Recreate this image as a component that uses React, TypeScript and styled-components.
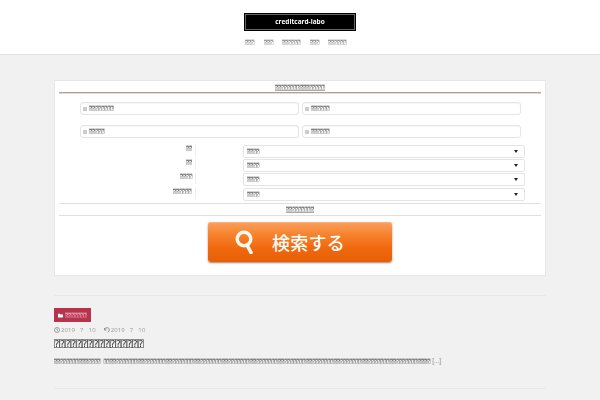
import React from "react";
import styled, { createGlobalStyle } from "styled-components";

const Global = createGlobalStyle`
  html, body { margin: 0; padding: 0; background: #f1f1f1; }
  body { width: 600px; height: 400px; overflow: hidden; font-family: "DejaVu Sans", sans-serif; color: #333; }
  * { box-sizing: border-box; }
`;

const Header = styled.header`
  height: 55px;
  background: #fff;
  border-bottom: 1px solid #e2e2e2;
  display: flex;
  flex-direction: column;
  align-items: center;
  padding-top: 13px;
`;
const Logo = styled.div`
  width: 112px;
  height: 18px;
  background: #000;
  padding: 1px;
  display: flex;
`;
const LogoInner = styled.div`
  flex: 1;
  border: 1px solid #666;
  color: #fff;
  font: bold 6.5px/14px "Open Sans", sans-serif;
  text-align: center;
  will-change: transform;
`;
const Nav = styled.nav`
  margin: 9px 8px 0 0;
  display: flex;
  gap: 9px;
`;
const Tofu = styled.span<{ $size?: number; $color?: string; $track?: number; $underline?: boolean }>`
  display: inline-block;
  will-change: transform;
  font-family: "DejaVu Sans Mono", monospace;
  font-size: ${(p) => p.$size ?? 5}px;
  line-height: 1;
  color: ${(p) => p.$color ?? "#555"};
  letter-spacing: ${(p) => p.$track ?? 0.1}px;
  white-space: nowrap;
  border-bottom: ${(p) => (p.$underline ? "1px solid #aaa" : "0")};
`;
const Main = styled.main`
  padding: 25px 54px 0;
`;
const Card = styled.section`
  height: 196px;
  background: #fff;
  border: 1px solid #e6e6e6;
  padding: 3px 4px 0;
  display: flex;
  flex-direction: column;
  align-items: stretch;
`;
const CardTitle = styled.div`
  height: 9px;
  border-bottom: 1px solid #b5a08e;
  box-shadow: 0 1px 0 #ddd;
  display: flex;
  justify-content: center;
  align-items: center;
`;
const Inputs = styled.div`
  margin: 9px 0 0 21px;
  width: 441px;
  display: grid;
  grid-template-columns: 219px 219px;
  column-gap: 3px;
  row-gap: 10px;
`;
const InputBox = styled.div`
  height: 13px;
  background: #fff;
  border: 1px solid #e4e4e4;
  border-radius: 3px;
  box-shadow: inset 0 1px 1px rgba(0, 0, 0, 0.03);
  display: flex;
  align-items: center;
  padding-left: 2px;
  gap: 2px;
`;
const Mark = styled.i`
  width: 4px;
  height: 4px;
  background: #ccc;
  display: block;
`;
const Selects = styled.div`
  margin: 7px 0 0 0;
  display: flex;
  flex-direction: column;
`;
const SelectRow = styled.div<{ $mb: number }>`
  display: grid;
  grid-template-columns: 133px 51px 282px;
  height: 13px;
  margin-bottom: ${(p) => p.$mb}px;
`;
const LabelCell = styled.div`
  display: flex;
  justify-content: flex-end;
  align-items: flex-start;
  padding-top: 1px;
`;
const Spacer = styled.div`
  border-left: 1px solid #eee;
  margin: 0 0 2px 3px;
`;
const SelectBox = styled.div`
  border: 1px solid #e4e4e4;
  border-radius: 2px;
  background: #fff;
  display: flex;
  align-items: center;
  justify-content: space-between;
  padding: 0 6px 0 3px;
`;
const Arrow = styled.i`
  width: 0;
  height: 0;
  border-left: 2.5px solid transparent;
  border-right: 2.5px solid transparent;
  border-top: 3px solid #222;
  display: block;
`;
const Note = styled.div`
  margin-top: 2px;
  height: 13px;
  border-top: 1px solid #e0e0e0;
  border-bottom: 1px solid #e4ddd8;
  display: flex;
  justify-content: center;
  align-items: center;
`;
const ButtonWrap = styled.div`
  display: flex;
  justify-content: center;
  margin-top: 6px;
`;
const SearchButton = styled.button`
  width: 184px;
  height: 40px;
  border: 0;
  border-radius: 3px;
  padding: 0 20px 0 0;
  background: linear-gradient(#f9a05e 0%, #f6842f 30%, #f0690f 65%, #e65e05 100%);
  box-shadow: 0 1px 2px rgba(90, 50, 20, 0.6), inset 0 1px 0 #fbb27a;
  color: #fff;
  font: 500 18px/40px "Noto Sans CJK JP", sans-serif;
  display: flex;
  align-items: center;
  justify-content: center;
  gap: 19px;
  letter-spacing: 0.3px;
`;
const Rule = styled.hr<{ $top: number }>`
  border: 0;
  border-top: 1px solid #e8e8e8;
  margin: ${(p) => p.$top}px 0 0;
`;
const Badge = styled.div`
  margin-top: 12px;
  width: 37px;
  height: 14px;
  background: #b6324d;
  display: flex;
  align-items: center;
  justify-content: center;
  gap: 2px;
`;
const Meta = styled.div`
  margin-top: 4px;
  display: flex;
  gap: 8px;
  height: 8px;
  align-items: center;
  font: 6px/8px "Open Sans", sans-serif;
  color: #999;
  letter-spacing: 0.1px;
  will-change: transform;
`;
const MetaItem = styled.span`
  display: flex;
  align-items: center;
  gap: 1px;
  white-space: pre;
`;
const Title = styled.h2`
  margin: 5px 0 0;
  height: 10px;
  display: flex;
  align-items: center;
  font-weight: normal;
`;
const Excerpt = styled.p`
  margin: 8px 0 0;
  height: 8px;
  display: flex;
  align-items: center;
  white-space: nowrap;
  font: 6.5px/8px "Liberation Sans", sans-serif;
  color: #888;
`;

const t = (n: number) => "⍰".repeat(n);

const Clock = () => (
  <svg width="6" height="6" viewBox="0 0 12 12" fill="none" stroke="#888" strokeWidth="1.6">
    <circle cx="6" cy="6" r="5" />
    <path d="M6 3v3.4l2 1" />
  </svg>
);
const Renew = () => (
  <svg width="6" height="6" viewBox="0 0 12 12" fill="none" stroke="#888" strokeWidth="1.8">
    <path d="M1.5 5.5A4.5 4.5 0 0 1 10.5 6c0 2-1 3.500-3 4.500" />
    <path d="M1 2v4h4" />
  </svg>
);
const Folder = () => (
  <svg width="5" height="5" viewBox="0 0 10 10" fill="#fff">
    <path d="M0 1.500h4l1 1.300h5v6H0z" />
  </svg>
);
const Magnifier = () => (
  <svg width="18" height="24" viewBox="0 0 18 24" fill="none" stroke="#fff8ee">
    <circle cx="9" cy="9" r="6.800" strokeWidth="3.400" />
    <path d="M12.500 16l3.500 6.500" strokeWidth="3.600" strokeLinecap="round" />
  </svg>
);

const inputs = [8, 6, 5, 6];
const selects: { label: number; mb: number }[] = [
  { label: 2, mb: 1 },
  { label: 2, mb: 1 },
  { label: 4, mb: 2 },
  { label: 6, mb: 0 },
];

export default function App() {
  return (
    <>
      <Global />
      <Header>
        <Logo>
          <LogoInner>creditcard-labo</LogoInner>
        </Logo>
        <Nav>
          {[3, 3, 6, 3, 6].map((n, i) => (
            <Tofu key={i} $color="#777">{t(n)}</Tofu>
          ))}
        </Nav>
      </Header>
      <Main>
        <Card>
          <CardTitle>
            <Tofu $underline>{t(16)}</Tofu>
          </CardTitle>
          <Inputs>
            {inputs.map((n, i) => (
              <InputBox key={i}>
                <Mark />
                <Tofu>{t(n)}</Tofu>
              </InputBox>
            ))}
          </Inputs>
          <Selects>
            {selects.map((s, i) => (
              <SelectRow key={i} $mb={s.mb}>
                <LabelCell>
                  <Tofu>{t(s.label)}</Tofu>
                </LabelCell>
                <Spacer />
                <SelectBox>
                  <Tofu>{t(4)}</Tofu>
                  <Arrow />
                </SelectBox>
              </SelectRow>
            ))}
          </Selects>
          <Note>
            <Tofu $underline>{t(9)}</Tofu>
          </Note>
          <ButtonWrap>
            <SearchButton>
              <Magnifier />
              検索する
            </SearchButton>
          </ButtonWrap>
        </Card>
        <Rule $top={19} />
        <Badge>
          <Folder />
          <Tofu $color="#f2b8c4">{t(7)}</Tofu>
        </Badge>
        <Meta>
          <MetaItem><Clock />{"2019   7   10"}</MetaItem>
          <MetaItem><Renew />{"2019   7   10"}</MetaItem>
        </Meta>
        <Title>
          <Tofu $size={9.300} $color="#333" $track={0}>{t(16)}</Tofu>
        </Title>
        <Excerpt>
          <Tofu>{t(15) + " " + t(105)}</Tofu>&nbsp;[...]
        </Excerpt>
        <Rule $top={23} />
      </Main>
    </>
  );
}
